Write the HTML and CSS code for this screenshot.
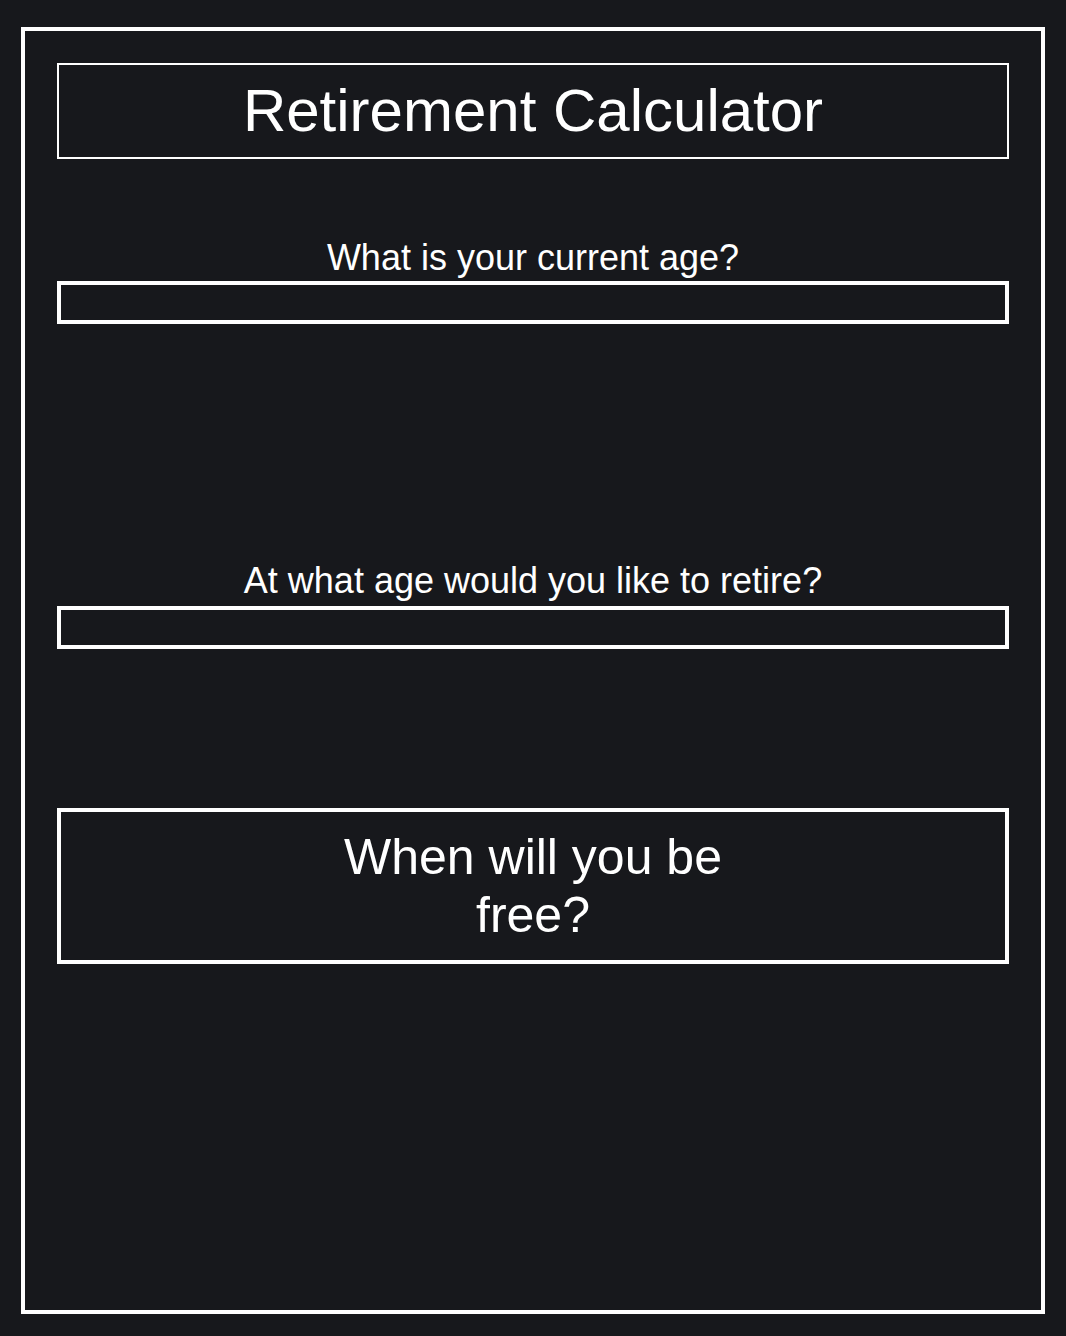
FILE: index.html
```html
<!DOCTYPE html>
<html lang="en">
<head>
<meta charset="utf-8">
<title>Retirement Calculator</title>
<link rel="stylesheet" href="styles.css">
</head>
<body>
<main class="card">
  <h1 class="title">Retirement Calculator</h1>
  <label class="label label-age" for="age">What is your current age?</label>
  <input class="input" id="age" type="text">
  <label class="label label-retire" for="retire">At what age would you like to retire?</label>
  <input class="input" id="retire" type="text">
  <button class="button" type="button">When will you be<br>free?</button>
</main>
</body>
</html>
```

FILE: styles.css
```css
html, body {
  margin: 0;
  padding: 0;
}

body {
  background: #17181c;
  color: #ffffff;
  font-family: "Liberation Sans", Arial, Helvetica, sans-serif;
  padding-top: 27px;
}

.card {
  width: 1024px;
  height: 1287px;
  margin: 0 auto;
  box-sizing: border-box;
  border: 4px solid #ffffff;
  padding: 32px;
  display: flex;
  flex-direction: column;
}

.title {
  margin: 0;
  border: 2px solid #ffffff;
  font-size: 60px;
  font-weight: normal;
  line-height: 92px;
  text-align: center;
}

.label {
  display: block;
  text-align: center;
  font-size: 36px;
  line-height: 41px;
}

.label-age {
  margin-top: 78px;
  margin-bottom: 3px;
}

.label-retire {
  margin-top: 236px;
  margin-bottom: 5px;
}

.input {
  display: block;
  width: 100%;
  height: 43px;
  box-sizing: border-box;
  margin: 0;
  border: 4px solid #ffffff;
  border-radius: 0;
  background: transparent;
  color: #ffffff;
  font-family: "Liberation Sans", Arial, sans-serif;
  font-size: 24px;
  outline: none;
}

.button {
  margin-top: 159px;
  width: 100%;
  box-sizing: border-box;
  border: 4px solid #ffffff;
  border-radius: 0;
  background: transparent;
  color: #ffffff;
  font-family: "Liberation Sans", Arial, sans-serif;
  font-size: 50px;
  line-height: 58px;
  padding: 16px;
  text-align: center;
}
```
